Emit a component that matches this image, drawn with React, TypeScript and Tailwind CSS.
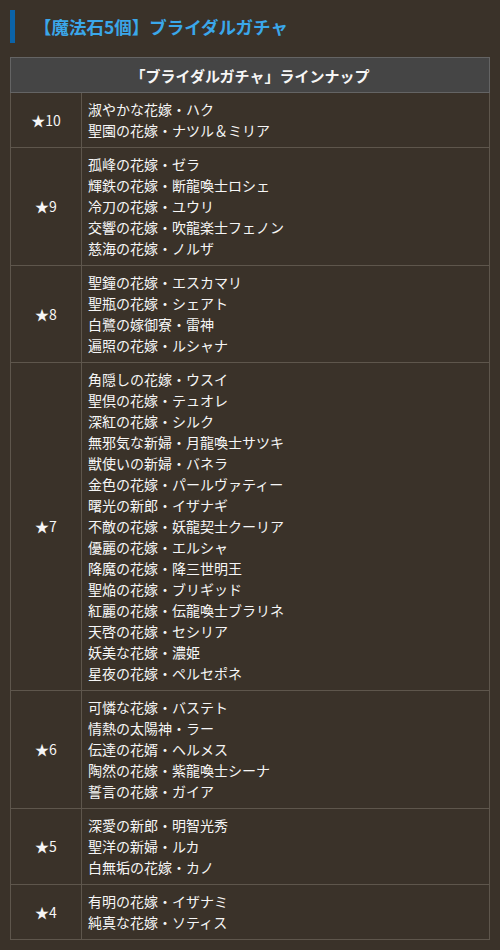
import React from "react"

const lineup: { rank: string; names: string[] }[] = [
  { rank: "10", names: ["淑やかな花嫁・ハク", "聖園の花嫁・ナツル＆ミリア"] },
  {
    rank: "9",
    names: ["孤峰の花嫁・ゼラ", "輝鉄の花嫁・断龍喚士ロシェ", "冷刀の花嫁・ユウリ", "交響の花嫁・吹龍楽士フェノン", "慈海の花嫁・ノルザ"],
  },
  { rank: "8", names: ["聖鐘の花嫁・エスカマリ", "聖瓶の花嫁・シェアト", "白鷺の嫁御寮・雷神", "遍照の花嫁・ルシャナ"] },
  {
    rank: "7",
    names: [
      "角隠しの花嫁・ウスイ",
      "聖倶の花嫁・テュオレ",
      "深紅の花嫁・シルク",
      "無邪気な新婦・月龍喚士サツキ",
      "獣使いの新婦・バネラ",
      "金色の花嫁・パールヴァティー",
      "曙光の新郎・イザナギ",
      "不敵の花嫁・妖龍契士クーリア",
      "優麗の花嫁・エルシャ",
      "降魔の花嫁・降三世明王",
      "聖焔の花嫁・ブリギッド",
      "紅麗の花嫁・伝龍喚士ブラリネ",
      "天啓の花嫁・セシリア",
      "妖美な花嫁・濃姫",
      "星夜の花嫁・ペルセポネ",
    ],
  },
  {
    rank: "6",
    names: ["可憐な花嫁・バステト", "情熱の太陽神・ラー", "伝達の花婿・ヘルメス", "陶然の花嫁・紫龍喚士シーナ", "誓言の花嫁・ガイア"],
  },
  { rank: "5", names: ["深愛の新郎・明智光秀", "聖洋の新婦・ルカ", "白無垢の花嫁・カノ"] },
  { rank: "4", names: ["有明の花嫁・イザナミ", "純真な花嫁・ソティス"] },
]

export default function App() {
  return (
    <div className="min-h-screen w-full bg-[#3a3229] px-[10px] pt-[10px] pb-[12px] text-[#f6f6f6] [font-family:'Noto_Sans_CJK_JP','Noto_Sans',sans-serif]">
      <h2 className="flex h-[33px] items-center border-l-[5px] border-[#0b63a8] pl-[19px] text-[17.5px] font-bold leading-none text-[#3aa7ea]">
        【魔法石5個】ブライダルガチャ
      </h2>

      <table className="mt-[14px] w-[480px] border-collapse border border-[#5e564c]">
        <thead>
          <tr>
            <th
              colSpan={2}
              className="h-[35px] border border-[#646464] bg-[#454545] text-center text-[15px] font-bold leading-none"
            >
              「ブライダルガチャ」ラインナップ
            </th>
          </tr>
        </thead>
        <tbody>
          {lineup.map((row) => (
            <tr key={row.rank}>
              <td className="w-[71px] border border-[#5e564c] text-center align-middle text-[14px] leading-[21px]">
                ★{row.rank}
              </td>
              <td className="border border-[#5e564c] py-[6px] pl-[6px] text-[14px] leading-[21px]">
                {row.names.map((name) => (
                  <div key={name}>{name}</div>
                ))}
              </td>
            </tr>
          ))}
        </tbody>
      </table>
    </div>
  )
}
